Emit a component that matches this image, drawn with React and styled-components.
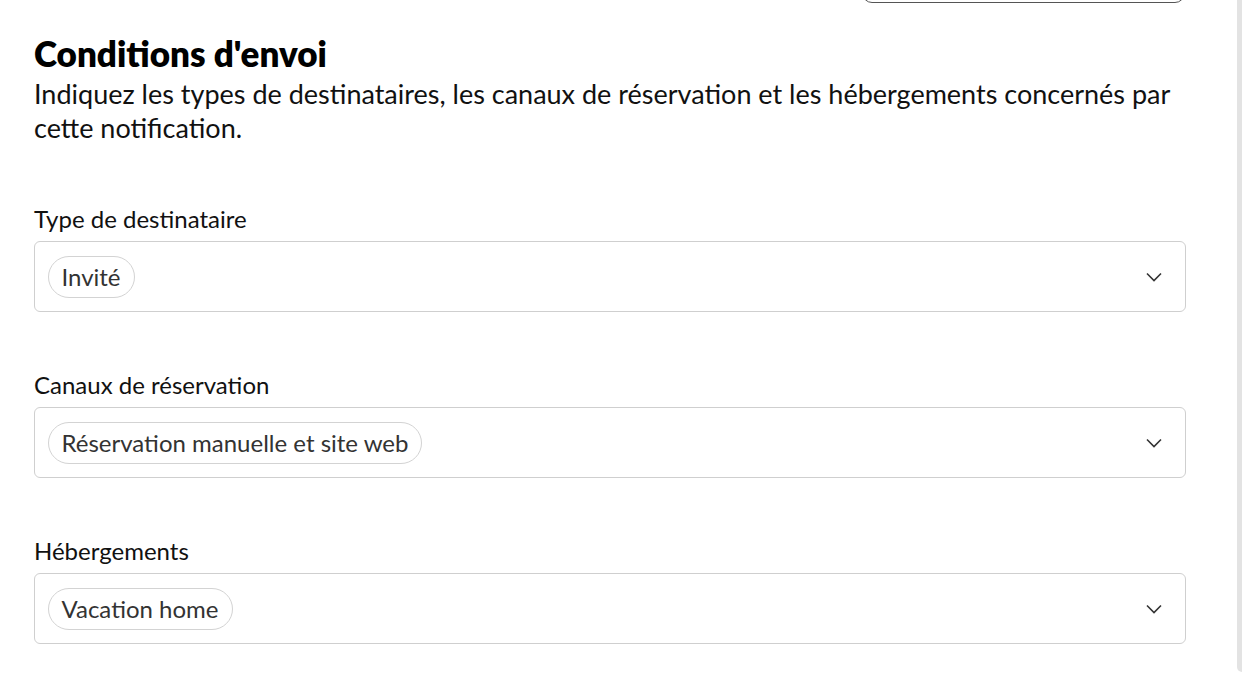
import React from "react";
import styled, { createGlobalStyle } from "styled-components";

const Global = createGlobalStyle`
  html, body { margin: 0; padding: 0; background: #fff; }
  body { font-family: Lato, "Noto Sans", sans-serif; color: #111; }
`;

const Page = styled.div`
  display: flex;
  width: 1242px;
  height: 692px;
  overflow: hidden;
`;

const Main = styled.main`
  flex: 1;
  padding: 0 51px 0 34px;
  display: flex;
  flex-direction: column;
`;

const TopBar = styled.div`
  display: flex;
  justify-content: flex-end;
  padding-right: 1px;
`;

const GhostButton = styled.div`
  width: 323px;
  height: 40px;
  margin-top: -37px;
  border: 1.5px solid #555;
  border-radius: 10px;
  box-sizing: border-box;
`;

const Title = styled.h2`
  margin: 31px 0 0;
  font-size: 35px;
  font-weight: 800;
  line-height: 38px;
  color: #000;
`;

const Description = styled.p`
  margin: 5px 0 0;
  font-size: 27px;
  line-height: 34px;
  color: #111;
`;

const Fields = styled.div`
  display: flex;
  flex-direction: column;
  gap: 59px;
  margin-top: 60px;
`;

const Field = styled.div`
  display: flex;
  flex-direction: column;
  gap: 8px;
`;

const Label = styled.label`
  font-size: 24px;
  line-height: 28px;
  color: #111;
`;

const SelectBox = styled.div`
  height: 71px;
  box-sizing: border-box;
  border: 1.5px solid #cfcfcf;
  border-radius: 6px;
  display: flex;
  align-items: center;
  justify-content: space-between;
  padding: 0 22px 0 12.5px;
`;

const Chip = styled.span`
  display: inline-flex;
  align-items: center;
  height: 42px;
  box-sizing: border-box;
  padding: 0 13px;
  border: 1.5px solid #d3d3d3;
  border-radius: 21px;
  font-size: 24px;
  color: #333;
`;

const Scrollbar = styled.div`
  width: 5px;
  height: 672px;
  background: #e3e3e3;
  border-bottom-left-radius: 5px;
`;

const Chevron = () => (
  <svg width="18" height="12" viewBox="0 0 18 12" fill="none">
    <path d="M2 2.5 L9 9.5 L16 2.5" stroke="#333" strokeWidth="1.6" />
  </svg>
);

const fields = [
  { label: "Type de destinataire", value: "Invité" },
  { label: "Canaux de réservation", value: "Réservation manuelle et site web" },
  { label: "Hébergements", value: "Vacation home" },
];

export default function App() {
  return (
    <>
      <Global />
      <Page>
        <Main>
          <TopBar>
            <GhostButton />
          </TopBar>
          <Title>Conditions d'envoi</Title>
          <Description>
            Indiquez les types de destinataires, les canaux de réservation et les hébergements concernés par cette notification.
          </Description>
          <Fields>
            {fields.map((f) => (
              <Field key={f.label}>
                <Label>{f.label}</Label>
                <SelectBox>
                  <Chip>{f.value}</Chip>
                  <Chevron />
                </SelectBox>
              </Field>
            ))}
          </Fields>
        </Main>
        <Scrollbar />
      </Page>
    </>
  );
}
